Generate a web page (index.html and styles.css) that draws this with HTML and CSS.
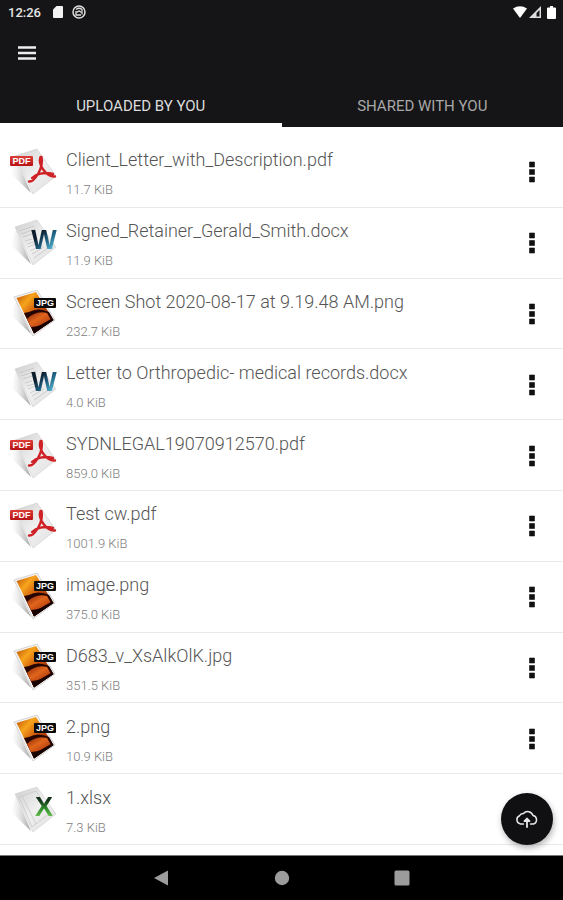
FILE: index.html
```
<!DOCTYPE html>
<html lang="en">
<head>
<meta charset="utf-8">
<meta name="viewport" content="width=device-width, initial-scale=1">
<title>Files</title>
<link rel="stylesheet" href="styles.css">
</head>
<body>
<svg class="defs" aria-hidden="true">
  <defs>
    <linearGradient id="paper" x1="0" y1="0" x2="1" y2="1"><stop offset="0" stop-color="#cecece"/><stop offset=".5" stop-color="#f0f0f0"/><stop offset="1" stop-color="#dedede"/></linearGradient>
    <linearGradient id="shade" x1="0" y1="0" x2="1" y2="0"><stop offset="0" stop-color="#ddd" stop-opacity="0"/><stop offset="1" stop-color="#a0a0a0"/></linearGradient>
    <linearGradient id="sunset" x1="0" y1="0" x2="1" y2="1"><stop offset="0" stop-color="#b84a05"/><stop offset=".25" stop-color="#f7a51c"/><stop offset=".5" stop-color="#c84d08"/><stop offset="1" stop-color="#3a0802"/></linearGradient>
    <linearGradient id="glow" x1="0" y1="0" x2="1" y2="1"><stop offset="0" stop-color="#8a2206"/><stop offset=".45" stop-color="#e0661c"/><stop offset="1" stop-color="#a42a08"/></linearGradient>
  </defs>
  <symbol id="sheet" viewBox="0 0 48 48">
    <path d="M6 10 1 26l20 19z" fill="url(#shade)"/>
    <path d="M5 8 27 1l19 27-23 18z" fill="url(#paper)" stroke="#cfcfcf" stroke-width=".6"/>
  </symbol>
  <symbol id="pdf" viewBox="0 0 48 48">
    <use href="#sheet"/>
    <path d="M30.500 9c-1.500 4 0 9 3 13 3.500 4.500 7.500 7 11.500 6.500M31.500 9c1 5 0 11-3.500 17-3 5-6 8-9 7.500M22 30c4-4 12-6.500 21-4" fill="none" stroke="#cf2226" stroke-width="2.400" stroke-linecap="round" stroke-linejoin="round"/>
  </symbol>
  <symbol id="doc" viewBox="0 0 48 48">
    <use href="#sheet"/>
    <path d="m9 12 15-5M11 15l15-5M13 18l9-3M15 22l7-2M17 25l7-2M18 28l10-4M20 32l12-6M22 35l12-7M24 39l14-10" stroke="#c4c4c4" stroke-width=".8"/>
  </symbol>
  <symbol id="xls" viewBox="0 0 48 48">
    <use href="#sheet"/>
    <path d="m9 11 17-6 14 22-18 14zM12 10l14 28" fill="none" stroke="#c9c9c9" stroke-width=".8"/>
  </symbol>
  <symbol id="img" viewBox="0 0 48 48">
    <path d="M6 12 1 25l20 19z" fill="url(#shade)"/>
    <path d="M4 7 27 0l18 30-22 16z" fill="#f4f4f4" stroke="#bbb" stroke-width=".6"/>
    <path d="M6.500 8 26 2l17.500 28L24 43.500z" fill="url(#sunset)"/>
    <path d="m14 23 5-1q9-5 20 0l4.500 8L24 43.500z" fill="#240501"/>
    <path d="M17 29q2-3 7-5 6-3 13-1l4 7q-8 6-20 7z" fill="url(#glow)"/>
    <path d="m22 39 5-2 14-8 2.500 1L24 43.500z" fill="#160100"/>
  </symbol>
  <symbol id="dots" viewBox="0 0 6 22">
    <path d="M.5 1h5v5h-5zM.5 8.500h5v5h-5zM.5 16h5v5h-5z" fill="#111" stroke="#111" stroke-linejoin="round" stroke-width=".6"/>
  </symbol>
</svg>

<header class="top">
  <div class="status">
    <span class="clock">12:26</span>
    <svg class="sd" viewBox="0 0 10 12"><path d="M3.500 0H9a1 1 0 0 1 1 1v10a1 1 0 0 1-1 1H1a1 1 0 0 1-1-1V3.500z" fill="#f2f2f2"/></svg>
    <svg class="sync" viewBox="0 0 14 14" fill="none" stroke="#ddd"><circle cx="7" cy="7" r="6" stroke-width="1.500"/><path d="M4 4.500q3-2.500 6 0v5M4 6v4h5M5 7.500q2-3 4 0" stroke-width="1.300"/></svg>
    <span class="signals">
      <svg class="wifi" viewBox="0 0 14 12"><path d="M7 12 0 2.500Q7-2 14 2.500z" fill="#fff"/></svg>
      <svg class="cell" viewBox="0 0 12 12"><path d="M12 0v12H0z" fill="#ddd"/><path d="M10.500 4v6.500H7.500V7z" fill="#151517"/></svg>
      <svg class="battery" viewBox="0 0 9 13"><path d="M3 0h3v1.500h2a1 1 0 0 1 1 1V12a1 1 0 0 1-1 1H1a1 1 0 0 1-1-1V2.500a1 1 0 0 1 1-1h2z" fill="#fff"/></svg>
    </span>
  </div>
  <div class="appbar">
    <button class="menu" aria-label="Menu"><svg viewBox="0 0 18 14"><path d="M0 1.500h18M0 7h18M0 12.500h18" stroke="#eee" stroke-width="2.600"/></svg></button>
  </div>
  <nav class="tabs">
    <button class="tab tab-active">UPLOADED BY YOU</button>
    <button class="tab">SHARED WITH YOU</button>
  </nav>
</header>

<main class="content">
  <ul class="files">
    <li class="file"><div class="thumb"><svg><use href="#pdf"/></svg><span class="tag tag-pdf">PDF</span></div><div class="info"><span class="name">Client_Letter_with_Description.pdf</span><span class="size">11.7 KiB</span></div><button class="more" aria-label="More"><svg><use href="#dots"/></svg></button></li>
    <li class="file"><div class="thumb"><svg><use href="#doc"/></svg><span class="letter letter-w">W</span></div><div class="info"><span class="name">Signed_Retainer_Gerald_Smith.docx</span><span class="size">11.9 KiB</span></div><button class="more" aria-label="More"><svg><use href="#dots"/></svg></button></li>
    <li class="file"><div class="thumb"><svg><use href="#img"/></svg><span class="tag tag-jpg">JPG</span></div><div class="info"><span class="name">Screen Shot 2020-08-17 at 9.19.48 AM.png</span><span class="size">232.7 KiB</span></div><button class="more" aria-label="More"><svg><use href="#dots"/></svg></button></li>
    <li class="file"><div class="thumb"><svg><use href="#doc"/></svg><span class="letter letter-w">W</span></div><div class="info"><span class="name">Letter to Orthropedic- medical records.docx</span><span class="size">4.0 KiB</span></div><button class="more" aria-label="More"><svg><use href="#dots"/></svg></button></li>
    <li class="file"><div class="thumb"><svg><use href="#pdf"/></svg><span class="tag tag-pdf">PDF</span></div><div class="info"><span class="name">SYDNLEGAL19070912570.pdf</span><span class="size">859.0 KiB</span></div><button class="more" aria-label="More"><svg><use href="#dots"/></svg></button></li>
    <li class="file"><div class="thumb"><svg><use href="#pdf"/></svg><span class="tag tag-pdf">PDF</span></div><div class="info"><span class="name">Test cw.pdf</span><span class="size">1001.9 KiB</span></div><button class="more" aria-label="More"><svg><use href="#dots"/></svg></button></li>
    <li class="file"><div class="thumb"><svg><use href="#img"/></svg><span class="tag tag-jpg">JPG</span></div><div class="info"><span class="name">image.png</span><span class="size">375.0 KiB</span></div><button class="more" aria-label="More"><svg><use href="#dots"/></svg></button></li>
    <li class="file"><div class="thumb"><svg><use href="#img"/></svg><span class="tag tag-jpg">JPG</span></div><div class="info"><span class="name">D683_v_XsAlkOlK.jpg</span><span class="size">351.5 KiB</span></div><button class="more" aria-label="More"><svg><use href="#dots"/></svg></button></li>
    <li class="file"><div class="thumb"><svg><use href="#img"/></svg><span class="tag tag-jpg">JPG</span></div><div class="info"><span class="name">2.png</span><span class="size">10.9 KiB</span></div><button class="more" aria-label="More"><svg><use href="#dots"/></svg></button></li>
    <li class="file"><div class="thumb"><svg><use href="#xls"/></svg><span class="letter letter-x">X</span></div><div class="info"><span class="name">1.xlsx</span><span class="size">7.3 KiB</span></div></li>
  </ul>
  <button class="upload" aria-label="Upload">
    <svg viewBox="0 0 24 18" fill="none" stroke="#e8e8e8" stroke-width="1.500" stroke-linecap="round" stroke-linejoin="round"><path d="M8.500 14H5.500A4.300 4.300 0 0 1 4.500 5.800 4 4 0 0 1 8.500 3.500 5.500 5.500 0 0 1 18 5.500 4.400 4.400 0 0 1 18.500 14H15.500"/><path d="M12 17V9M9.500 11.200 12 8.500l2.500 2.700z" fill="#e8e8e8" stroke-width="1.800"/></svg>
  </button>
</main>

<footer class="navbar">
  <button aria-label="Back"><svg viewBox="0 0 16 16"><path d="M14 .5v15L0 8z" fill="#9c9c9c"/></svg></button>
  <button aria-label="Home"><svg viewBox="0 0 16 16"><circle cx="8" cy="8" r="7.200" fill="#9c9c9c"/></svg></button>
  <button aria-label="Recents"><svg viewBox="0 0 16 16"><rect x=".5" y=".5" width="15" height="15" rx="1.500" fill="#9c9c9c"/></svg></button>
</footer>
</body>
</html>
```
FILE: styles.css
```
* { box-sizing: border-box; }

body {
  margin: 0;
  min-height: 100vh;
  display: flex;
  flex-direction: column;
  background: #fff;
  font-family: Roboto, "Liberation Sans", sans-serif;
}

button {
  border: 0;
  padding: 0;
  background: none;
  color: inherit;
  font: inherit;
  display: flex;
  align-items: center;
  justify-content: center;
}

svg { display: block; }

.defs { position: absolute; width: 0; height: 0; }

.top { background: #151517; color: #e6e6e6; }

.status {
  display: flex;
  align-items: center;
  height: 24px;
  padding: 0 7px 0 8px;
}

.clock { font-size: 13px; font-weight: 500; margin-right: 12px; }
.sd { width: 10px; height: 12px; margin-right: 9px; }
.sync { width: 14px; height: 14px; }
.signals { display: flex; align-items: center; margin-left: auto; }
.wifi { width: 14px; height: 12px; margin-right: 2px; }
.cell { width: 12px; height: 12px; margin-right: 6px; }
.battery { width: 9px; height: 13px; }

.appbar {
  display: flex;
  align-items: center;
  height: 58px;
  padding-left: 18px;
}

.menu svg { width: 18px; height: 14px; }

.tabs { display: grid; grid-template-columns: 1fr 1fr; }

.tab {
  height: 45px;
  border-bottom: 4px solid #151517;
  padding-top: 6px;
  font-size: 15px;
  color: #a8a8a8;
}

.tab-active { color: #dcdcdc; border-color: #fff; }

.content {
  flex: 1;
  display: flex;
  padding: 10px 0;
  position: relative;
}

.files {
  flex: 1;
  display: grid;
  grid-auto-rows: 1fr;
  margin: 0;
  padding: 0;
  list-style: none;
}

.file {
  display: flex;
  align-items: center;
  gap: 8px;
  padding: 1px 17px 0 10px;
  border-bottom: 1px solid #e9e9e9;
}

.thumb { position: relative; width: 48px; height: 48px; }
.thumb svg { width: 48px; height: 48px; }

.tag {
  position: absolute;
  top: 8px;
  height: 10px;
  border-radius: 1px;
  color: #fff;
  font: bold 9px/10px "Liberation Sans", sans-serif;
  text-align: center;
}

.tag-pdf { left: 0; width: 23px; background: linear-gradient(#dd3c36, #b81417); }
.tag-jpg { left: 24px; width: 22px; background: #0b0b0b; }

.letter {
  position: absolute;
  top: 8px;
  left: 20px;
  width: 28px;
  color: transparent;
  background-clip: text;
  text-align: center;
  font: bold 27px/26px "Liberation Sans", sans-serif;
}

.letter-w { background-image: linear-gradient(135deg, #0c1c2b 30%, #1f5f80 55%, #4fb0d0 80%); }
.letter-x { background-image: linear-gradient(#12351a 25%, #2f8a2c 55%, #62bd4c 85%); }

.info {
  flex: 1;
  display: flex;
  flex-direction: column;
  gap: 10px;
  padding-top: 2px;
}

.name { font-size: 18px; line-height: 24px; font-weight: 300; color: #555; }
.size { font-size: 13px; line-height: 16px; font-weight: 300; color: #808080; }

.more { width: 28px; height: 48px; }
.more svg { width: 6px; height: 22px; }

.upload {
  position: absolute;
  right: 10px;
  bottom: 10px;
  width: 52px;
  height: 52px;
  border-radius: 50%;
  background: #101012;
  box-shadow: 1px 3px 6px rgba(0, 0, 0, .3);
}

.upload svg { width: 24px; height: 18px; }

.navbar {
  display: flex;
  align-items: center;
  justify-content: center;
  gap: 104px;
  height: 45px;
  border-top: 1px solid #777;
  background: #000;
}

.navbar svg { width: 16px; height: 16px; }
```
